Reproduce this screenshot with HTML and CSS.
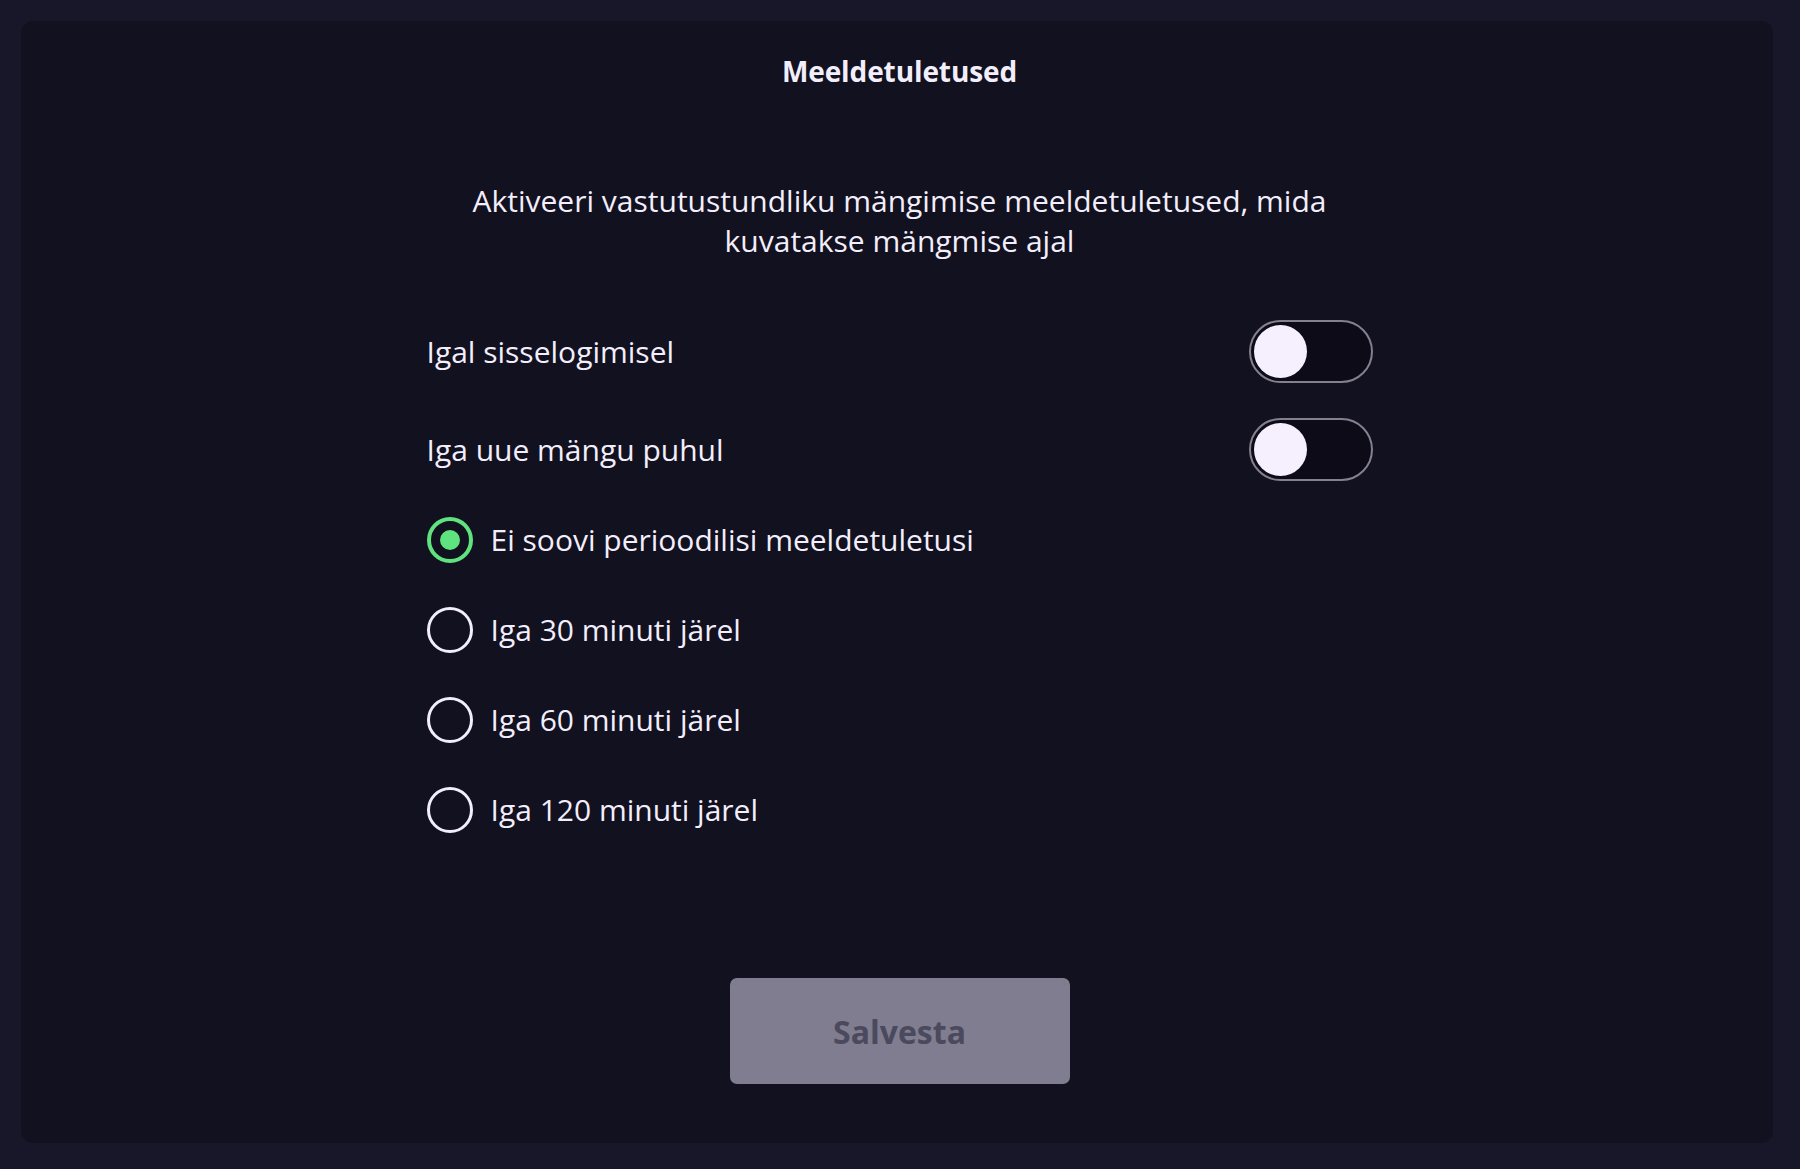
FILE: index.html
```html
<!DOCTYPE html>
<html lang="et">
<head>
<meta charset="utf-8">
<title>Meeldetuletused</title>
<link rel="stylesheet" href="styles.css">
</head>
<body>
<div class="page">
  <section class="panel">
    <h1 class="title">Meeldetuletused</h1>
    <p class="intro">Aktiveeri vastutustundliku mängimise meeldetuletused, mida<br>kuvatakse mängmise ajal</p>
    <div class="settings">
      <div class="toggle-row">
        <span class="label">Igal sisselogimisel</span>
        <span class="toggle"><span class="knob"></span></span>
      </div>
      <div class="toggle-row">
        <span class="label">Iga uue mängu puhul</span>
        <span class="toggle"><span class="knob"></span></span>
      </div>
      <div class="radios">
        <div class="radio-row"><span class="radio checked"><span class="dot"></span></span><span class="label">Ei soovi perioodilisi meeldetuletusi</span></div>
        <div class="radio-row"><span class="radio"></span><span class="label">Iga 30 minuti järel</span></div>
        <div class="radio-row"><span class="radio"></span><span class="label">Iga 60 minuti järel</span></div>
        <div class="radio-row"><span class="radio"></span><span class="label">Iga 120 minuti järel</span></div>
      </div>
    </div>
    <button class="save" type="button">Salvesta</button>
  </section>
</div>
</body>
</html>
```
FILE: styles.css
```css
html, body {
  margin: 0;
  padding: 0;
  background: #181629;
}
body {
  font-family: "Open Sans", "Noto Sans", sans-serif;
  color: #f3eefb;
}
.page {
  padding: 21px 27px 26px 21px;
  height: 1169px;
  box-sizing: border-box;
}
.panel {
  height: 100%;
  background: #12111f;
  border-radius: 12px;
  display: flex;
  flex-direction: column;
  align-items: center;
  padding-top: 30px;
  padding-left: 5px;
  box-sizing: border-box;
}
.title {
  margin: 0;
  font-size: 28px;
  line-height: 40px;
  font-weight: 700;
  letter-spacing: -0.1px;
}
.intro {
  margin: 90px 0 0;
  font-size: 30px;
  line-height: 40px;
  text-align: center;
  font-weight: 400;
}
.settings {
  width: 946px;
  margin-top: 59px;
  display: flex;
  flex-direction: column;
}
.label {
  font-size: 30px;
  line-height: 40px;
}
.toggle-row {
  display: flex;
  justify-content: space-between;
  align-items: center;
  height: 63px;
  margin-bottom: 35px;
}
.toggle {
  width: 124px;
  height: 63px;
  box-sizing: border-box;
  border: 2px solid #83818f;
  border-radius: 32px;
  background: #0c0b17;
  display: flex;
  align-items: center;
  padding-left: 3px;
}
.knob {
  width: 53px;
  height: 53px;
  border-radius: 50%;
  background: #f6effd;
}
.radios {
  display: flex;
  flex-direction: column;
  gap: 44px;
  margin-top: 1px;
}
.radio-row {
  display: flex;
  align-items: center;
  height: 46px;
  gap: 18px;
}
.radio {
  width: 46px;
  height: 46px;
  box-sizing: border-box;
  border: 3px solid #f3eefb;
  border-radius: 50%;
  display: flex;
  align-items: center;
  justify-content: center;
  flex: none;
}
.radio.checked {
  border: 4px solid #5fe37f;
}
.dot {
  width: 20px;
  height: 20px;
  border-radius: 50%;
  background: #5fe37f;
}
.save {
  margin-top: 145px;
  width: 340px;
  height: 106px;
  border: none;
  border-radius: 7px;
  background: #7f7d8f;
  color: #4b495d;
  font-family: "Open Sans", "Noto Sans", sans-serif;
  font-size: 32px;
  font-weight: 700;
}
```
